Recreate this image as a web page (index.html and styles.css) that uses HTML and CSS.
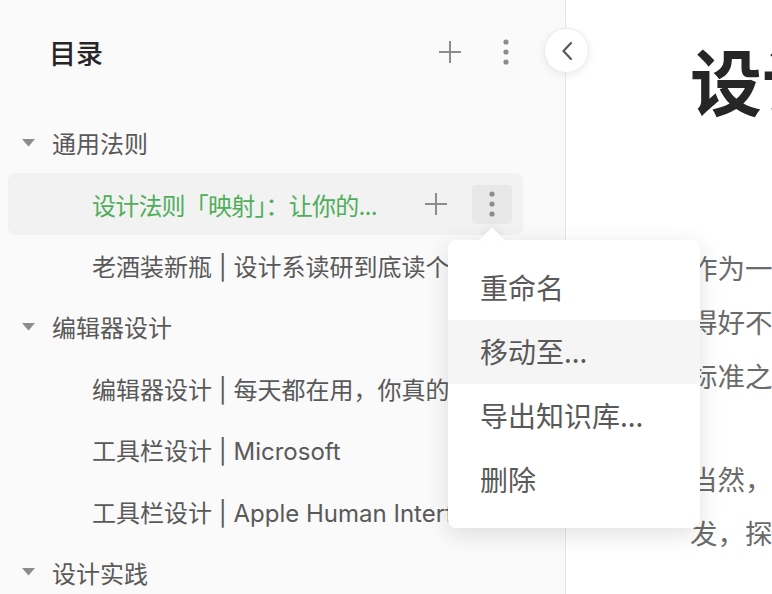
FILE: index.html
```html
<!DOCTYPE html>
<html lang="zh-CN">
<head>
<meta charset="utf-8">
<title>目录</title>
<link rel="stylesheet" href="styles.css">
</head>
<body>
<aside class="sidebar">
  <div class="side-header">
    <h2 class="side-title">目录</h2>
    <div class="header-actions">
      <span class="icon-btn">
        <svg width="22" height="22" viewBox="0 0 22 22"><path d="M11 0V22M0 11H22" stroke="#8c8c8c" stroke-width="2" fill="none"/></svg>
      </span>
      <span class="icon-btn">
        <svg width="6" height="26" viewBox="0 0 6 26"><circle cx="3" cy="3" r="2.6" fill="#8c8c8c"/><circle cx="3" cy="13" r="2.6" fill="#8c8c8c"/><circle cx="3" cy="23" r="2.6" fill="#8c8c8c"/></svg>
      </span>
    </div>
  </div>
  <ul class="tree">
    <li class="row parent"><svg class="caret" width="13" height="8" viewBox="0 0 13 8"><polygon points="0,0 13,0 6.5,7.5" fill="#8c8c8c"/></svg><span class="label">通用法则</span></li>
    <li class="row child active"><span class="label">设计法则「映射」：让你的...</span>
      <span class="row-actions">
        <span class="row-plus"><svg width="22" height="22" viewBox="0 0 22 22"><path d="M11 0V22M0 11H22" stroke="#8c8c8c" stroke-width="2" fill="none"/></svg></span>
        <span class="row-more"><svg width="6" height="26" viewBox="0 0 6 26"><circle cx="3" cy="3" r="2.6" fill="#8c8c8c"/><circle cx="3" cy="13" r="2.6" fill="#8c8c8c"/><circle cx="3" cy="23" r="2.6" fill="#8c8c8c"/></svg></span>
      </span>
    </li>
    <li class="row child"><span class="label">老酒装新瓶 | 设计系读研到底读个什么？</span></li>
    <li class="row parent"><svg class="caret" width="13" height="8" viewBox="0 0 13 8"><polygon points="0,0 13,0 6.5,7.5" fill="#8c8c8c"/></svg><span class="label">编辑器设计</span></li>
    <li class="row child"><span class="label">编辑器设计 | 每天都在用，你真的了解编辑器吗</span></li>
    <li class="row child"><span class="label">工具栏设计 | Microsoft</span></li>
    <li class="row child"><span class="label">工具栏设计 | Apple Human Interface Guidelines</span></li>
    <li class="row parent"><svg class="caret" width="13" height="8" viewBox="0 0 13 8"><polygon points="0,0 13,0 6.5,7.5" fill="#8c8c8c"/></svg><span class="label">设计实践</span></li>
  </ul>
</aside>

<main class="content">
  <h1 class="doc-title">设计法则「映射」：让你的产品更易用</h1>
  <p class="para">作为一名设计师，我们经常会被问到一个问题<br>得好不好？有没有一些可以遵循的原则<br>标准之一，就是产品是否易于理解</p>
  <p class="para">当然，好的设计需要从用户<br>发，探索用户的心智模型</p>
</main>

<button class="collapse-btn" type="button" aria-label="收起">
  <svg width="12" height="20" viewBox="0 0 12 20"><path d="M10 2L2.5 10L10 18" stroke="#595959" stroke-width="2.2" fill="none" stroke-linecap="round" stroke-linejoin="round"/></svg>
</button>

<div class="menu">
  <div class="menu-item">重命名</div>
  <div class="menu-item hover">移动至...</div>
  <div class="menu-item">导出知识库...</div>
  <div class="menu-item">删除</div>
</div>
</body>
</html>
```
FILE: styles.css
```css
* { box-sizing: border-box; }

html, body {
  margin: 0;
  padding: 0;
}

body {
  width: 772px;
  height: 594px;
  overflow: hidden;
  position: relative;
  display: flex;
  font-family: "Inter", "Noto Sans CJK SC", sans-serif;
  color: #595959;
  background: #fff;
}

.sidebar {
  width: 566px;
  flex: none;
  height: 100%;
  background: #fafafa;
  border-right: 1px solid #e6e6e6;
  overflow: hidden;
}

.side-header {
  height: 104px;
  display: flex;
  align-items: center;
  justify-content: space-between;
  padding: 0 43px 0 49px;
}

.side-title {
  margin: 0;
  font-size: 27px;
  font-weight: 500;
  color: #262626;
  font-family: "Noto Sans CJK SC", sans-serif;
}

.header-actions {
  display: flex;
  gap: 24px;
}

.icon-btn {
  width: 32px;
  height: 32px;
  display: flex;
  align-items: center;
  justify-content: center;
}

.tree {
  list-style: none;
  margin: 8px 0 0;
  padding: 0;
}

.row {
  height: 61.4px;
  display: flex;
  align-items: center;
  white-space: nowrap;
  font-size: 24px;
  color: #595959;
}

.row.parent {
  padding-left: 22px;
}

.caret {
  flex: none;
  margin-right: 17px;
}

.row.child {
  padding-left: 92px;
}

.row.active {
  margin: 0 42px 0 8px;
  padding: 0 11px 0 84px;
  border-radius: 8px;
  background: #f2f2f2;
}

.row.active .label {
  color: #4fae5a;
  flex: 1;
  overflow: hidden;
  letter-spacing: -0.8px;
}

.row-actions {
  display: flex;
  align-items: center;
  gap: 25px;
}

.row-plus {
  display: flex;
}

.row-more {
  width: 40px;
  height: 39px;
  border-radius: 4px;
  background: #e8e8e8;
  display: flex;
  align-items: center;
  justify-content: center;
}

.content {
  flex: 1;
  min-width: 0;
  overflow: hidden;
  padding-left: 124px;
  white-space: nowrap;
  font-family: "Noto Sans CJK SC", sans-serif;
}

.doc-title {
  margin: 0;
  padding-top: 36px;
  font-size: 72px;
  line-height: 86px;
  font-weight: 700;
  color: #262626;
}

.para {
  margin: 118px 0 0;
  font-size: 27.5px;
  line-height: 54px;
  color: #6b6b6b;
}

.para + .para {
  margin-top: 49px;
}

.collapse-btn {
  position: absolute;
  left: 544px;
  top: 28px;
  width: 45px;
  height: 45px;
  padding: 0;
  border-radius: 50%;
  border: 1px solid #ededed;
  background: #fff;
  box-shadow: 0 2px 8px rgba(0, 0, 0, 0.08);
  display: flex;
  align-items: center;
  justify-content: center;
}

.menu {
  position: absolute;
  left: 448px;
  top: 240px;
  width: 252px;
  padding: 16px 0;
  background: #fff;
  border-radius: 8px;
  box-shadow: 0 6px 24px rgba(0, 0, 0, 0.12);
  font-family: "Noto Sans CJK SC", sans-serif;
}

.menu::before {
  content: "";
  position: absolute;
  left: 35px;
  top: -9px;
  width: 18px;
  height: 18px;
  background: #fff;
  transform: rotate(45deg);
  box-shadow: -3px -3px 6px rgba(0, 0, 0, 0.04);
}

.menu-item {
  position: relative;
  height: 64px;
  display: flex;
  align-items: center;
  padding-left: 32px;
  padding-bottom: 2px;
  font-size: 28px;
  color: #595959;
}

.menu-item.hover {
  background: #f5f5f5;
}
```
